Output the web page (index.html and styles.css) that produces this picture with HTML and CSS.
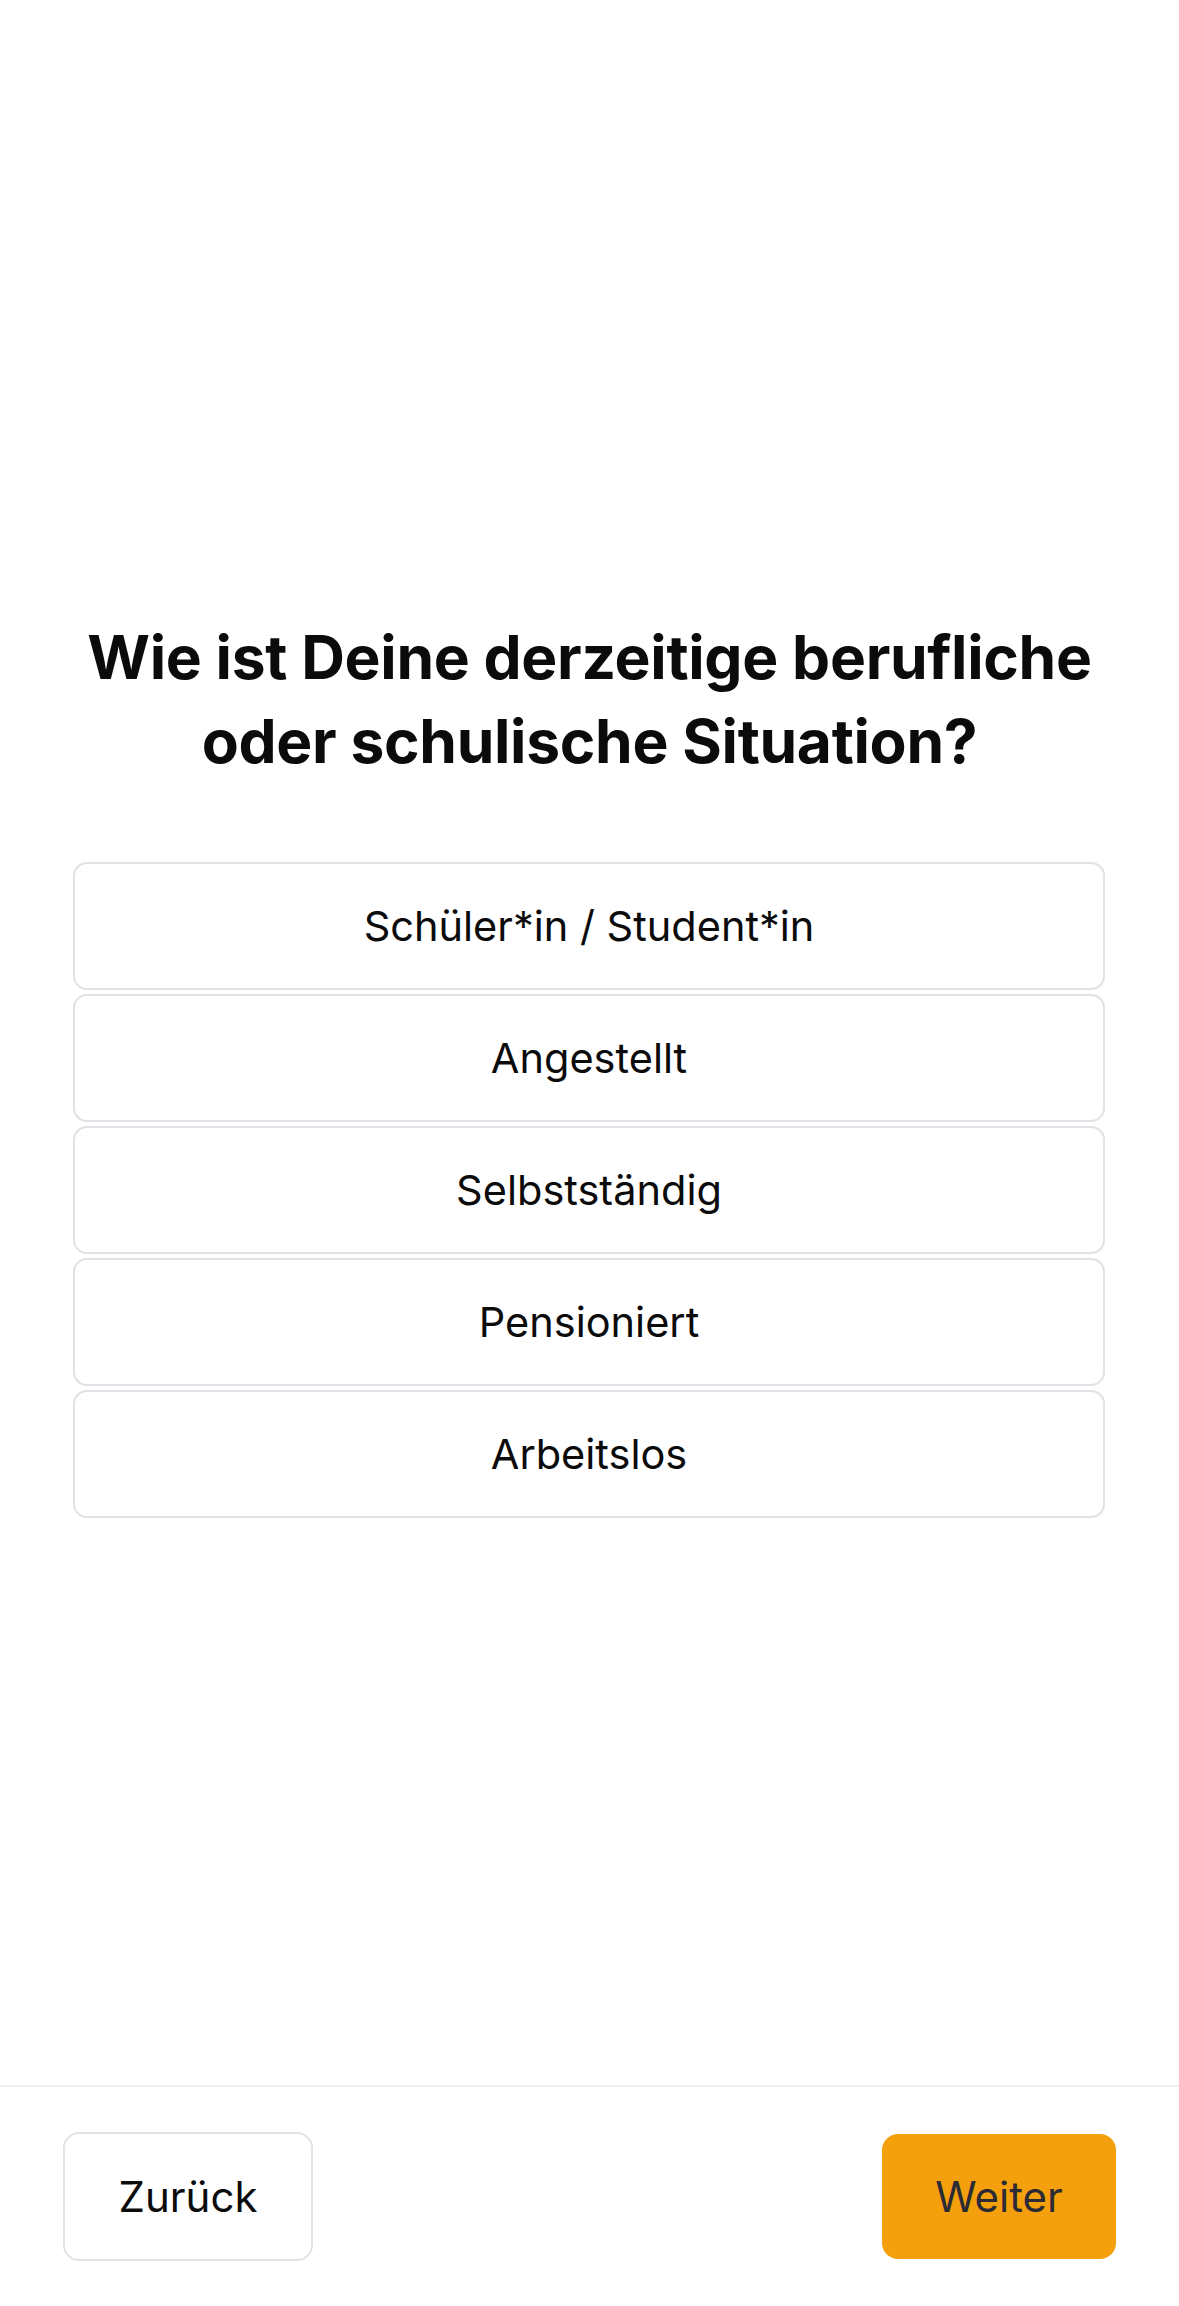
FILE: index.html
```html
<!DOCTYPE html>
<html lang="de">
<head>
<meta charset="utf-8">
<title>Situation</title>
<link rel="stylesheet" href="styles.css">
</head>
<body>
<div class="page">
  <main class="main">
    <h1 class="title">Wie ist Deine derzeitige berufliche<br>oder schulische Situation?</h1>
    <div class="options">
      <button class="option">Schüler*in / Student*in</button>
      <button class="option">Angestellt</button>
      <button class="option">Selbstständig</button>
      <button class="option">Pensioniert</button>
      <button class="option">Arbeitslos</button>
    </div>
  </main>
  <footer class="footer">
    <button class="btn btn-back">Zurück</button>
    <button class="btn btn-next">Weiter</button>
  </footer>
</div>
</body>
</html>
```

FILE: styles.css
```css
* { box-sizing: border-box; }
html, body { margin: 0; padding: 0; background: #ffffff; }
body { font-family: Inter, "Noto Sans", sans-serif; color: #0b0b0c; }

.page {
  height: 2306px;
  display: flex;
  flex-direction: column;
}

.main {
  flex: 1;
  padding-top: 615px;
}

.title {
  margin: 0;
  font-family: Inter, sans-serif;
  font-weight: 700;
  font-size: 60.5px;
  line-height: 84px;
  text-align: center;
  letter-spacing: -0.3px;
  color: #0b0b0c;
}

.options {
  margin: 79px 74px 0 73px;
  display: flex;
  flex-direction: column;
  gap: 4px;
}

.option {
  height: 128px;
  border: 2px solid #e1e1e6;
  border-radius: 14px;
  background: #ffffff;
  font-family: Inter, sans-serif;
  font-size: 41.5px;
  font-weight: 400;
  color: #0b0b0c;
  padding: 0;
}

.footer {
  height: 221px;
  border-top: 2px solid #efeff1;
  display: flex;
  justify-content: space-between;
  align-items: center;
  padding: 0 63px;
}

.btn {
  font-family: Inter, sans-serif;
  font-size: 42px;
  font-weight: 400;
  border-radius: 16px;
  padding: 0;
}

.btn-back {
  width: 250px;
  height: 129px;
  background: #ffffff;
  border: 2px solid #e3e3e6;
  color: #0b0b0c;
}

.btn-next {
  width: 234px;
  height: 125px;
  background: #f4a00d;
  border: none;
  color: #2b2a35;
}
```
